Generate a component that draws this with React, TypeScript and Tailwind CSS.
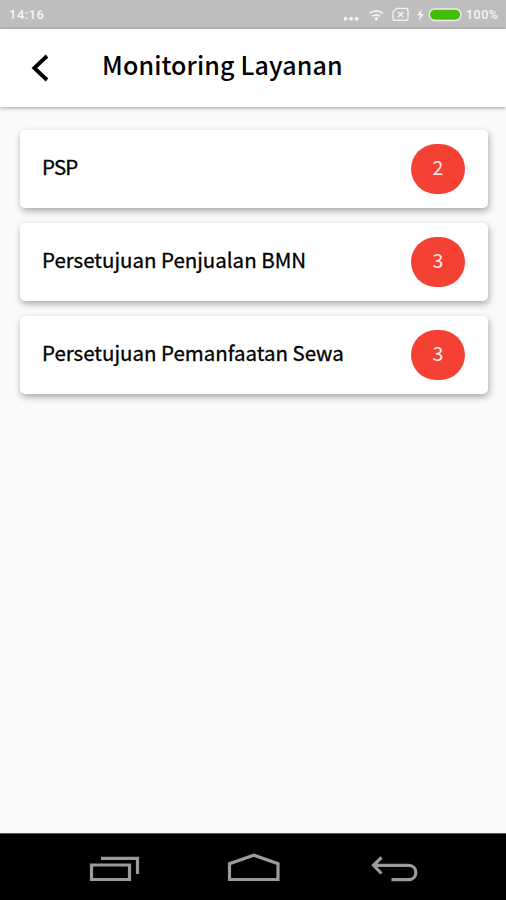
const services = [
  { name: 'PSP', count: 2, spacing: 'tracking-[-0.8px]' },
  { name: 'Persetujuan Penjualan BMN', count: 3, spacing: 'tracking-[-0.02px]' },
  { name: 'Persetujuan Pemanfaatan Sewa', count: 3, spacing: 'tracking-[-0.02px]' },
];

function StatusBar() {
  return (
    <div className="flex h-[29px] shrink-0 items-center bg-[#bebebe] pl-[9px] pr-[8px] font-['Roboto',sans-serif] text-[13px] font-medium text-[#f7f7f7]">
      <span className="mt-px w-[36px] whitespace-nowrap tracking-[0.5px]">14:16</span>
      <svg className="ml-auto h-[29px] w-[120px] shrink-0" viewBox="342 0 120 29" fill="none">
        <g fill="#f4f4f4">
          <circle cx="345.5" cy="18.7" r="1.9" />
          <circle cx="351" cy="18.7" r="1.9" />
          <circle cx="356.5" cy="18.7" r="1.9" />
          <circle cx="376.2" cy="18.8" r="1.7" />
          <path d="m421.8 9-4.8 6.3h3.2L418.7 21l5.3-7h-3.2z" />
        </g>
        <g stroke="#f4f4f4">
          <path d="M369.8 13.3q6.4-4.7 12.8 0M372.3 16.2q3.9-2.8 7.8 0" strokeWidth="1.7" />
          <path d="M396.5 8.4h9q2.5 0 2.5 2.5v7q0 2.5-2.5 2.5h-10q-2.5 0-2.5-2.5v-6z" strokeWidth="1.3" />
          <path d="m398 11.7 5.5 5.5m0-5.5-5.5 5.5" strokeWidth="1.4" />
        </g>
        <rect x="428.6" y="8.2" width="33" height="13" rx="6.5" fill="#eeeeee" />
        <rect x="430" y="9.7" width="30.2" height="10" rx="5" fill="#44be05" />
      </svg>
      <span className="ml-[4px] mt-px w-[32px] whitespace-nowrap text-[12.5px] tracking-[0.5px]">100%</span>
    </div>
  );
}

function Header() {
  return (
    <header className="flex h-[78px] shrink-0 items-center bg-white shadow-[0_1px_4px_rgba(0,0,0,0.35)]">
      <button aria-label="Back" className="ml-[28px] h-[30px] w-[24px]">
        <svg viewBox="0 0 24 30" className="h-[30px] w-[24px]" fill="none" stroke="#000" strokeWidth="3.8">
          <path d="M19 3 6.3 15 19 27" />
        </svg>
      </button>
      <h1 className="-mt-[8px] ml-[50px] whitespace-nowrap text-[25px] font-medium leading-[36px] tracking-[0.14px] text-black">
        Monitoring Layanan
      </h1>
    </header>
  );
}

function NavigationBar() {
  return (
    <nav className="flex h-[67px] shrink-0 items-center border-t border-[#555] bg-black">
      <svg className="h-[66px] w-[506px]" viewBox="0 834 506 66" fill="none" stroke="#9b9b9b" strokeWidth="3.2">
        <path d="M91.5 865h38v14.5h-38zM101 858.4h36.5V874" />
        <path d="M229.5 879.5v-15.8l24.3-8.5 24.2 8.5v15.8z" />
        <path d="M373.5 865.3h35c9.8 0 9.8 14.3 0 14.3h-17M381.5 857.3l-8 8 8 8.2" />
      </svg>
    </nav>
  );
}

export default function App() {
  return (
    <div className="flex h-[900px] w-[506px] flex-col overflow-hidden bg-[#fafafa] font-['Noto_Sans_CJK_SC','Noto_Sans',sans-serif]">
      <StatusBar />
      <Header />
      <main className="flex flex-1 flex-col gap-[15px] pl-[20px] pr-[18px] pt-[23px]">
        {services.map((service) => (
          <div
            key={service.name}
            className="flex h-[78px] items-center justify-between rounded-[5px] bg-white pl-[22px] pr-[23px] shadow-[1px_3px_7px_rgba(0,0,0,0.33)]"
          >
            <span
              className={`-mt-[6px] whitespace-nowrap text-[20.5px] leading-[30px] text-black [-webkit-text-stroke:0.3px_black] ${service.spacing}`}
            >
              {service.name}
            </span>
            <span className="flex h-[50px] w-[54px] items-center justify-center rounded-full bg-[#f44133] pb-[4px] text-[19.5px] leading-none text-[#ffeeea]">
              {service.count}
            </span>
          </div>
        ))}
      </main>
      <NavigationBar />
    </div>
  );
}
